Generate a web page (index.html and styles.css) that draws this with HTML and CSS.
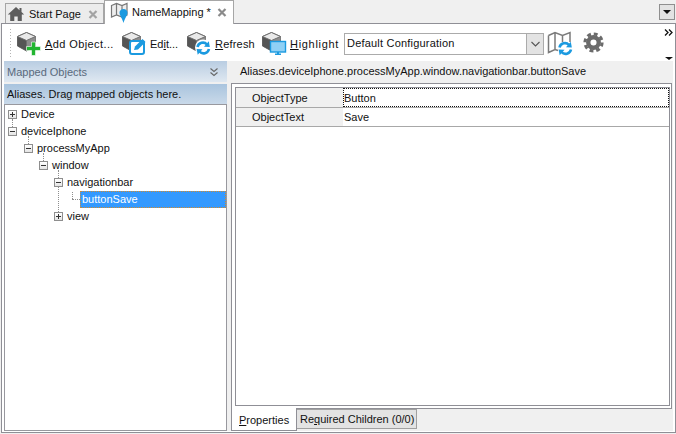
FILE: index.html
```html
<!DOCTYPE html>
<html lang="en">
<head>
<meta charset="utf-8">
<title>NameMapping</title>
<link rel="stylesheet" href="styles.css">
</head>
<body>
<svg class="defs" width="0" height="0" aria-hidden="true">
  <defs>
    <g id="cube">
      <path d="M1.500 5.500 10.500 1.500 19.500 5.500 19.500 15 10.500 20 1.500 15Z" fill="#6e6e6e" stroke="#6e6e6e" stroke-linejoin="round"/>
      <path d="M1.500 5.500 10.500 1.500 19.500 5.500 10.500 9.500Z" fill="#e9e9e9" stroke="#707070" stroke-linejoin="round"/>
      <path d="M1.500 6 10 9.800V19.500L1.500 15Z" fill="#555"/>
      <path d="M11 9.800 19.500 6V15L11 19.500Z" fill="#8d8d8d"/>
    </g>
    <g id="sync">
      <path d="M1.500 6.500A5.500 5.500 0 0 1 11 4" fill="none" stroke="#1b9ae0" stroke-width="2.600"/>
      <path d="M13.800 6.500 8 6.200 12.800 .8Z" fill="#1b9ae0"/>
      <path d="M13 8.500A5.500 5.500 0 0 1 3.500 11" fill="none" stroke="#1b9ae0" stroke-width="2.600"/>
      <path d="M.6 8.500 6.500 8.800 1.700 14.200Z" fill="#1b9ae0"/>
    </g>
    <g id="close"><path d="M1.500 1 8.500 8M8.500 1 1.500 8" fill="none" stroke-width="2.200"/></g>
  </defs>
</svg>
<div class="tabstrip">
  <div class="tab">
    <svg class="tab-icon" width="18" height="16" viewBox="0 0 18 16"><path d="M9 1 .8 8.500H3.200V15H7.300V10.500H10.700V15H14.800V8.500H17.200L14.500 6V2H12.500V4.200Z" fill="#5d5d5d"/></svg>
    <span class="tab-label">Start Page</span>
    <svg class="tab-close" width="10" height="9" viewBox="0 0 10 9"><use href="#close"/></svg>
  </div>
  <div class="tab tab-active">
    <svg class="tab-icon" width="20" height="22" viewBox="0 0 20 22"><path d="M1.500 4.500 6.500 2.500 12 4.500 17 2.500V14L12 16 6.500 14 1.500 16Z M6.500 2.500V14 M12 4.500V16" fill="#eee" stroke="#777" stroke-width="1.200"/><path d="M13.500 8C16 8 17.500 9.800 17.500 11.800 17.500 14.500 14.800 17 13.500 22 12.200 17 9.500 14.500 9.500 11.800 9.500 9.800 11 8 13.500 8Z" fill="#1b9ae0"/></svg>
    <span class="tab-label">NameMapping *</span>
    <svg class="tab-close" width="10" height="9" viewBox="0 0 10 9"><use href="#close"/></svg>
  </div>
  <div class="tab-menu"><span class="arrow-down"></span></div>
</div>
<div class="frame">
  <div class="toolbar">
    <div class="grip"></div>
    <div class="tool tool-add">
      <svg width="26" height="26" viewBox="0 0 26 26"><use href="#cube" y="1"/><path d="M15.500 12H19.500V16.500H24.500V20.500H19.500V25.500H15.500V20.500H10.500V16.500H15.500Z" fill="#22b531" stroke="#fff" stroke-width=".6"/></svg>
      <span><u>A</u>dd Object...</span>
    </div>
    <div class="tool tool-edit">
      <svg width="26" height="26" viewBox="0 0 26 26"><use href="#cube" y="1"/><rect x="9" y="11" width="14" height="13" rx="2" fill="#fff" stroke="#1b9ae0" stroke-width="2"/><path d="M13 20 14 16.500 21.500 9 24.500 12 17 19.500Z" fill="#1b9ae0"/></svg>
      <span>Ed<u>i</u>t...</span>
    </div>
    <div class="tool tool-refresh">
      <svg width="26" height="26" viewBox="0 0 26 26"><use href="#cube" y="1"/><circle cx="17" cy="17.500" r="8" fill="#fff"/><use href="#sync" x="10" y="10.500"/></svg>
      <span><u>R</u>efresh</span>
    </div>
    <div class="tool tool-highlight">
      <svg width="26" height="26" viewBox="0 0 26 26"><use href="#cube" y="1"/><rect x="9.500" y="11.500" width="15" height="10.500" fill="#8fd0f5" stroke="#1b9ae0" stroke-width="1.400"/><path d="M14 25H20V23.500H18V22H16V23.500H14Z" fill="#1b9ae0"/></svg>
      <span><u>H</u>ighlight</span>
    </div>
    <div class="combo">
      <span class="combo-text">Default Configuration</span>
      <span class="combo-btn"><svg width="9" height="6" viewBox="0 0 9 6"><path d="M.5 1 4.500 5 8.500 1" fill="none" stroke="#555" stroke-width="1.100"/></svg></span>
    </div>
    <svg class="tool-map" width="26" height="26" viewBox="0 0 26 26"><path d="M1.500 5.500 8 2.500 15.500 5.500 23 2.500V12M15.500 5.500V12M8 2.500V19.500M1.500 5.500V22.500L8 19.500 11 20.500" fill="none" stroke="#7b7b7b" stroke-width="1.500"/><use href="#sync" x="11" y="11"/></svg>
    <svg class="tool-gear" width="21" height="21" viewBox="0 0 22 22"><circle cx="11" cy="11" r="5.500" fill="none" stroke="#6b6b6b" stroke-width="4.600"/><circle cx="11" cy="11" r="9" fill="none" stroke="#6b6b6b" stroke-width="3.200" stroke-dasharray="4.070 3"/></svg>
    <div class="overflow">
      <svg width="9" height="7" viewBox="0 0 9 7"><path d="M1 .5 4 3.500 1 6.500M5 .5 8 3.500 5 6.500" fill="none" stroke="#111" stroke-width="1.300"/></svg>
      <span class="arrow-down small"></span>
    </div>
  </div>
  <div class="content">
    <aside class="left">
      <div class="panel-head">
        <span>Mapped Objects</span>
        <svg width="8" height="9" viewBox="0 0 8 9"><path d="M.5 .5 4 3.500 7.500 .5M.5 4.500 4 7.500 7.500 4.500" fill="none" stroke="#666" stroke-width="1.100"/></svg>
      </div>
      <div class="alias-bar">Aliases. Drag mapped objects here.</div>
      <div class="tree">
        <div class="node"><span class="exp plus"></span><span class="lbl">Device</span></div>
        <div class="node"><span class="exp"><i class="up"></i></span><span class="lbl">deviceIphone</span></div>
        <div class="node lv1"><span class="exp"><i class="up"></i></span><span class="lbl">processMyApp</span></div>
        <div class="node lv2"><span class="exp"><i class="up"></i></span><span class="lbl">window</span></div>
        <div class="node lv3"><span class="exp"><i class="up"></i></span><span class="lbl">navigationbar</span></div>
        <div class="node lv4"><span class="dash"></span><span class="lbl sel">buttonSave</span></div>
        <div class="node lv3"><span class="exp plus"><i class="up long"></i></span><span class="lbl">view</span></div>
      </div>
    </aside>
    <section class="right">
      <div class="path">Aliases.deviceIphone.processMyApp.window.navigationbar.buttonSave</div>
      <div class="box">
        <div class="grid">
          <div class="row row-first"><span class="key">ObjectType</span><span class="val focus">Button</span></div>
          <div class="row"><span class="key">ObjectText</span><span class="val">Save</span></div>
        </div>
      </div>
      <div class="subtabs">
        <span class="subtab active"><u>P</u>roperties</span>
        <span class="subtab">Re<u>q</u>uired Children (0/0)</span>
      </div>
    </section>
  </div>
</div>
</body>
</html>
```
FILE: styles.css
```css
html, body { margin: 0; padding: 0; }
body {
  width: 676px; height: 434px; overflow: hidden; background: #f0f0f0;
  font: 11px/15px "Liberation Sans", Arial, sans-serif; color: #111;
  display: flex; flex-direction: column;
}
.defs { position: absolute; }
u { text-decoration: underline; text-underline-offset: 1px; }

.tabstrip { height: 23px; display: flex; align-items: flex-end; padding-left: 5px; position: relative; flex: none; }
.tab {
  height: 20px; width: 99px; box-sizing: border-box; display: flex; align-items: center;
  border: 1px solid #a6a6a6; border-bottom: 0; background: #ececec; padding: 1px 0 0 1px;
}
.tab-icon { flex: none; }
.tab-label { margin-left: 4px; white-space: nowrap; }
.tab-close { margin-left: auto; margin-right: 5px; stroke: #a3a3a3; flex: none; }
.tab-active {
  height: 24px; width: 130px; background: #fff; margin-bottom: -1px; position: relative; z-index: 1;
  padding: 0 0 1px 5px;
}
.tab-active .tab-label { margin-left: 2px; }
.tab-active .tab-close { stroke: #8b8b8b; margin-right: 6px; }
.tab-menu {
  position: absolute; right: 1px; top: 4px; width: 16px; height: 16px; box-sizing: border-box;
  border: 1px solid #8f8f8f; background: #e3e3e3; display: flex; align-items: center; justify-content: center;
}
.arrow-down { width: 0; height: 0; border: 4px solid transparent; border-top: 4px solid #111; border-bottom: 0; }
.arrow-down.small { border-width: 3px 4px 0; border-top-color: #111; border-bottom: 0; }

.frame {
  margin: 0 0 1px 1px; flex: 1; min-height: 0; box-sizing: border-box;
  border: 1px solid #8f8f96; background: #fff; padding: 0 2px 1px; display: flex; flex-direction: column;
}
.toolbar { height: 37px; flex: none; background: #fff; display: flex; align-items: center; padding-left: 5px; position: relative; }
.grip { width: 3px; height: 30px; background: radial-gradient(circle, #b4b4b4 0.8px, transparent 1px) 0 0 / 3px 3px; margin-right: 4px; flex: none; }
.tool { display: flex; align-items: center; gap: 3px; white-space: nowrap; flex: none; box-sizing: border-box; }
.tool span { position: relative; top: 2px; }
.tool-add { width: 105px; letter-spacing: .4px; }
.tool-edit { width: 65px; }
.tool-refresh { width: 75px; letter-spacing: .2px; }
.tool-highlight { width: 83px; letter-spacing: .7px; }
.combo {
  width: 200px; height: 22px; box-sizing: border-box; border: 1px solid #ababab; background: #fff;
  display: flex; align-items: center; padding-left: 2px; flex: none; margin-top: 2px;
}
.combo-text { flex: 1; letter-spacing: .2px; }
.combo-btn { width: 16px; height: 20px; background: #e3e3e3; border-left: 1px solid #ababab; display: flex; align-items: center; justify-content: center; }
.tool-map { margin-left: 3px; flex: none; }
.tool-gear { margin-left: 10px; flex: none; }
.overflow { position: absolute; right: 0; top: 5px; height: 31px; width: 9px; display: flex; flex-direction: column; justify-content: space-between; align-items: center; }

.content { flex: 1; min-height: 0; display: flex; background: #f0f0f0; }
.left { width: 223px; display: flex; flex-direction: column; flex: none; }
.panel-head {
  height: 21px; box-sizing: border-box; flex: none; display: flex; align-items: center; justify-content: space-between;
  padding: 2px 9px 0 3px; color: #5a6a7c; background: linear-gradient(#b9cde2, #dfe8f1);
}
.alias-bar { height: 20px; flex: none; margin-top: 2px; padding-left: 3px; line-height: 20px; background: linear-gradient(#a9c4de, #c9d9e9); }

.tree { flex: 1; background: #fff; border: 1px solid #98989e; padding-top: 1px; }
.node { height: 17px; display: flex; align-items: center; padding-left: 3px; white-space: nowrap; }
.lv1 { padding-left: 19px; }
.lv2 { padding-left: 34px; }
.lv3 { padding-left: 49px; }
.lv4 { padding-left: 67px; }
.exp { width: 9px; height: 9px; box-sizing: border-box; border: 1px solid #8e8e8e; background: linear-gradient(#fff, #e4e4e4); position: relative; flex: none; }
.exp::before { content: ""; position: absolute; left: 1px; top: 3px; width: 5px; height: 1px; background: #333; }
.exp.plus::after { content: ""; position: absolute; left: 3px; top: 1px; width: 1px; height: 5px; background: #333; }
.up { position: absolute; left: 3px; top: -9px; height: 8px; border-left: 1px dotted #8e8e8e; }
.up.long { top: -26px; height: 25px; }
.lbl { margin-left: 3px; padding: 0 1px; line-height: 17px; }
.dash { width: 8px; border-top: 1px dotted #8e8e8e; flex: none; position: relative; }
.dash::before { content: ""; position: absolute; left: 0; top: -8px; height: 7px; border-left: 1px dotted #8e8e8e; }
.sel { background: #3399ff; color: #fff; flex: 1; margin-left: 0; padding-left: 2px; outline: 1px dotted #d08a30; outline-offset: -1px; }

.right { flex: 1; min-width: 0; display: flex; flex-direction: column; padding: 0 1px 0 4px; }
.path { height: 22px; line-height: 20px; padding-left: 9px; flex: none; }
.box { flex: 1; min-height: 0; background: #fff; border: 1px solid #8f8f96; padding: 3px 1px 2px 3px; display: flex; }
.grid { flex: 1; border: 1px solid #8f8f96; background: #fff; }
.row { height: 18px; border-bottom: 1px solid #a8a8a8; display: flex; line-height: 18px; }
.row-first { height: 19px; line-height: 20px; }
.key { width: 107px; padding-left: 16px; background: #f0f0f0; box-sizing: border-box; flex: none; }
.val { flex: 1; padding-left: 1px; }
.focus { outline: 1px dotted #111; outline-offset: -1px; }

.subtabs { height: 22px; flex: none; display: flex; align-items: flex-start; }
.subtab { height: 20px; line-height: 19px; padding: 0 3px; width: 121px; margin-left: -1px; border: 1px solid #a0a0a0; background: #e3e3e3; box-sizing: border-box; white-space: nowrap; }
.subtab.active { position: relative; z-index: 1; background: #fff; border: 1px solid #8f8f96; border-top: 0; margin: -1px 0 0 0; height: 23px; line-height: 24px; width: 66px; padding: 0 0 0 7px; flex: none; }
```
